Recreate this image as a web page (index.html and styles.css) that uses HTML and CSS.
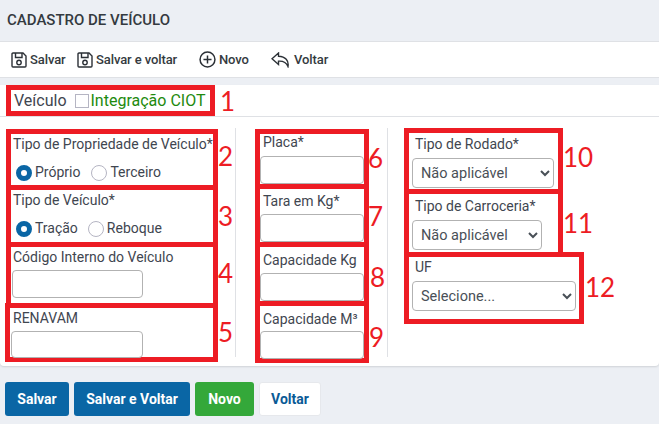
FILE: index.html
```html
<!DOCTYPE html>
<html lang="pt-BR">
<head>
    <meta charset="UTF-8">
    <title>Cadastro de Veículo</title>
    <link rel="stylesheet" href="styles.css">
</head>
<body>
    <div class="page-title">CADASTRO DE VEÍCULO</div>

    <div class="toolbar">
        <a class="tool tool-salvar">
            <svg class="icon" viewBox="0 0 16 16"><path d="M1 2a1 1 0 0 1 1-1h10l3 3v10a1 1 0 0 1-1 1h-12a1 1 0 0 1-1-1z"/><path d="M4.500 1v4.500h6.500v-4.500"/><circle cx="8" cy="10.500" r="2.200"/></svg>
            Salvar
        </a>
        <a class="tool tool-salvar-voltar">
            <svg class="icon" viewBox="0 0 16 16"><path d="M1 2a1 1 0 0 1 1-1h10l3 3v10a1 1 0 0 1-1 1h-12a1 1 0 0 1-1-1z"/><path d="M4.500 1v4.500h6.500v-4.500"/><circle cx="8" cy="10.500" r="2.200"/></svg>
            Salvar e voltar
        </a>
        <a class="tool tool-novo">
            <svg class="icon icon-novo" viewBox="0 0 16 16"><circle cx="8" cy="8" r="7"/><path d="M8 4.200v7.600M4.200 8h7.600"/></svg>
            Novo
        </a>
        <a class="tool">
            <svg class="icon icon-voltar" viewBox="0 0 20 16"><path d="M7.500 1 1 6.800l6.500 5.700V9.200c4.500-.3 7.500.5 9.500 5.300 1-6-2.500-10-9.500-10.300z"/></svg>
            Voltar
        </a>
    </div>

    <div class="panel">
        <div class="tabs">
            <div class="mark tab-mark">
                Veículo
                <label class="ciot"><input type="checkbox">Integração CIOT</label>
                <span class="num num-1">1</span>
            </div>
        </div>

        <div class="columns">
            <div class="col col-a">
                <div class="mark field f2">
                    <label>Tipo de Propriedade de Veículo*</label>
                    <div class="radios">
                        <label><input type="radio" name="prop" checked>Próprio</label>
                        <label><input type="radio" name="prop">Terceiro</label>
                    </div>
                    <span class="num">2</span>
                </div>
                <div class="mark field f3">
                    <label>Tipo de Veículo*</label>
                    <div class="radios">
                        <label><input type="radio" name="tipo" checked>Tração</label>
                        <label><input type="radio" name="tipo">Reboque</label>
                    </div>
                    <span class="num">3</span>
                </div>
                <div class="mark field f4">
                    <label>Código Interno do Veículo</label>
                    <input type="text" class="box">
                    <span class="num">4</span>
                </div>
                <div class="mark field f5">
                    <label>RENAVAM</label>
                    <input type="text" class="box">
                    <span class="num">5</span>
                </div>
            </div>

            <div class="col col-b">
                <div class="mark field f6">
                    <label>Placa*</label>
                    <input type="text" class="box">
                    <span class="num">6</span>
                </div>
                <div class="mark field f7">
                    <label>Tara em Kg*</label>
                    <input type="text" class="box">
                    <span class="num">7</span>
                </div>
                <div class="mark field f8">
                    <label>Capacidade Kg</label>
                    <input type="text" class="box">
                    <span class="num">8</span>
                </div>
                <div class="mark field f9">
                    <label>Capacidade M³</label>
                    <input type="text" class="box">
                    <span class="num">9</span>
                </div>
            </div>

            <div class="col col-c">
                <div class="mark field f10">
                    <label>Tipo de Rodado*</label>
                    <select class="box"><option>Não aplicável</option></select>
                    <span class="num">10</span>
                </div>
                <div class="mark field f11">
                    <label>Tipo de Carroceria*</label>
                    <select class="box"><option>Não aplicável</option></select>
                    <span class="num">11</span>
                </div>
                <div class="mark field f12">
                    <label>UF</label>
                    <select class="box"><option>Selecione...</option></select>
                    <span class="num">12</span>
                </div>
            </div>
        </div>
    </div>

    <div class="actions">
        <button class="btn btn-blue">Salvar</button>
        <button class="btn btn-blue">Salvar e Voltar</button>
        <button class="btn btn-green">Novo</button>
        <button class="btn btn-white">Voltar</button>
    </div>
</body>
</html>
```

FILE: styles.css
```css
* {
    box-sizing: border-box;
}
body {
    margin: 0;
    height: 424px;
    overflow: hidden;
    background: #eceff4;
    font-family: Roboto, "Liberation Sans", sans-serif;
    font-size: 14px;
    line-height: 21px;
    color: #3f4650;
}
.page-title {
    height: 42px;
    padding: 10px 7px 0;
    font-size: 15px;
    font-weight: 500;
    border-bottom: 1px solid #dfe1e5;
    color: #343a40;
}
.toolbar {
    display: flex;
    align-items: center;
    height: 36px;
    padding-left: 11px;
    background: #fff;
    border-bottom: 1px solid #dfe1e5;
    font-size: 13px;
    font-weight: 500;
    letter-spacing: -.1px;
    color: #343a40;
}
.tool {
    display: flex;
    align-items: center;
    gap: 3px;
}
.tool-salvar {
    width: 66px;
}
.tool-salvar-voltar {
    width: 122px;
}
.tool-novo {
    width: 72px;
}
.icon {
    width: 16px;
    height: 16px;
    fill: none;
    stroke: #2b3036;
    stroke-width: 1.4;
}
.icon-novo {
    width: 17px;
    height: 17px;
}
.icon-voltar {
    width: 20px;
}
.panel {
    height: 281px;
    margin-top: 7px;
    background: #fff;
    border-radius: 0 0 4px 4px;
    box-shadow: 0 1px 2px rgba(0, 0, 0, .12);
}
.tabs {
    height: 32px;
    padding-left: 6px;
    border-bottom: 1px solid #dfe1e5;
}
.mark {
    position: relative;
    border: 5px solid #ed1c24;
}
.tab-mark {
    display: flex;
    align-items: center;
    width: 209px;
    height: 31px;
    padding-left: 3px;
    font-size: 16px;
}
.ciot {
    display: flex;
    align-items: center;
    margin-left: 8px;
    color: #1e8a0e;
}
.ciot input {
    appearance: none;
    width: 14px;
    height: 14px;
    margin: 0 2px 0 0;
    background: #fff;
    border: 1px solid #b5b5c3;
}
.num {
    position: absolute;
    left: calc(100% + 5px);
    top: 50%;
    transform: translateY(-50%);
    font-family: Lato, "Noto Sans", sans-serif;
    font-size: 26px;
    line-height: 26px;
    color: #ed1c24;
}
.num-1 {
    left: calc(100% + 10px);
}
.columns {
    display: flex;
    padding-top: 11px;
}
.col {
    display: flex;
    flex-direction: column;
}
.col-a {
    width: 235px;
    padding: 1px 0 0 6px;
}
.col-b {
    width: 152px;
    padding: 1px 0 0 19px;
    border-left: 1px solid #dfe1e5;
    height: 229px;
}
.col-c {
    padding: 0 0 0 16px;
    border-left: 1px solid #dfe1e5;
    height: 229px;
}
.field {
    flex: none;
    width: 212px;
    padding-left: 2px;
    margin-bottom: -5px;
}
.field > label {
    display: block;
}
.box {
    display: block;
    height: 28px;
    margin: 2px 0 0 -1px;
    padding: 0 4px;
    background: #fff;
    border: 1px solid #b2b2b2;
    border-radius: 4px;
    font: inherit;
    color: #495057;
}
select.box {
    font-size: 14.5px;
}
.radios {
    display: flex;
    gap: 11px;
    margin: 7px 0 0 3px;
}
.radios label {
    display: flex;
    align-items: center;
    gap: 3px;
}
.radios input {
    appearance: none;
    width: 16px;
    height: 16px;
    margin: 0;
    border: 1px solid #b5b5c3;
    border-radius: 50%;
    background: #fff;
}
.radios input:checked {
    border: 5px solid #0a66a5;
}
.f2 {
    height: 61px;
}
.f2 .num {
    top: calc(50% - 4px);
}
.f3 {
    height: 62px;
}
.f3 .radios {
    gap: 10px;
}
.f4 {
    height: 66px;
}
.f4 .num {
    top: calc(50% - 2px);
}
.f4 .box,
.f5 .box {
    width: 131px;
}
.f5 {
    height: 59px;
    margin-left: -1px;
    width: 213px;
    padding-left: 3px;
}
.f5 .box {
    width: 132px;
    height: 27px;
    margin-left: -2px;
}
.f5 .num {
    top: calc(50% - 1px);
}
.col-b .field {
    width: 114px;
    padding-left: 3px;
}
.col-b .field > label {
    margin-top: -2px;
}
.col-b .box {
    width: 104px;
    margin: 3px 0 0 -3px;
}
.col-b .num {
    left: calc(100% + 4px);
}
.col-b .f8 .num {
    left: calc(100% + 6px);
    top: calc(50% + 3px);
}
.col-b .f6 .num {
    top: calc(50% - 1px);
}
.col-b .f9 .num {
    left: calc(100% + 5px);
    top: calc(50% + 5px);
}
.f6 {
    height: 60px;
}
.f7 {
    height: 63px;
}
.col-b .f7 > label {
    margin-top: 2px;
}
.col-b .f7 .box {
    margin-top: 2px;
}
.f8 {
    height: 64px;
}
.col-b .f8 > label {
    margin-top: 3px;
}
.col-b .f8 .box {
    margin-top: 2px;
}
.f9 {
    height: 62px;
}
.col-b .f9 > label {
    margin-top: 3px;
}
.col-b .f9 .box {
    margin-top: 1px;
}
.col-c .field {
    width: 159px;
    padding-left: 6px;
}
.col-c .box {
    margin: 3px 0 0 -3px;
    height: 30px;
}
.f10 {
    height: 66px;
}
.f10 .box {
    width: 142px;
}
.f10 > label {
    margin-top: 1px;
}
.f10 .num {
    top: calc(50% - 4px);
}
.f11 {
    height: 68px;
}
.f11 > label {
    margin-top: 2px;
}
.f11 .box {
    width: 130px;
}
.col-c .f12 {
    height: 72px;
    width: 180px;
}
.f12 .box {
    width: 164px;
}
.f12 .num {
    top: calc(50% - 1px);
    left: calc(100% + 6px);
}
.actions {
    display: flex;
    gap: 5px;
    margin: 16px 0 0 5px;
}
.btn {
    height: 34px;
    padding: 0;
    border: 1px solid transparent;
    border-radius: 3px;
    font: inherit;
    font-weight: 700;
    color: #fff;
}
.btn-blue {
    background: #0a66a5;
    width: 64px;
}
.btn-blue + .btn-blue {
    width: 116px;
}
.btn-green {
    background: #34a83a;
    width: 59px;
}
.btn-white {
    background: #fff;
    width: 62px;
    border-color: #e6e8ec;
    color: #0a5a96;
}
```
